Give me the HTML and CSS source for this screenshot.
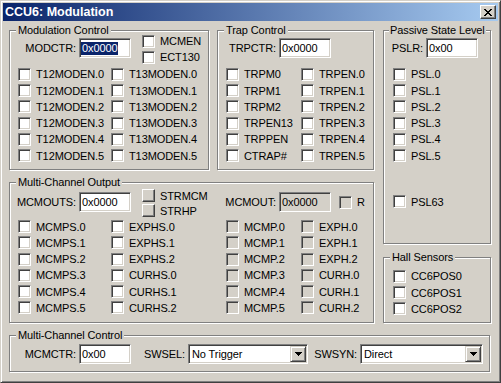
FILE: index.html
```html
<!DOCTYPE html>
<html lang="en">
<head>
  <meta charset="UTF-8">
  <title>CCU6: Modulation</title>
  <link rel="stylesheet" href="styles.css">
</head>
<body>
  <div class="window">
    <div class="titlebar">
      <span class="title">CCU6: Modulation</span>
      <button class="close" type="button">
        <svg width="8" height="7" viewBox="0 0 8 7" shape-rendering="crispEdges">
          <path d="M0 0h2v1h-2zM6 0h2v1h-2zM1 1h2v1h-2zM5 1h2v1h-2zM2 2h4v1h-4zM3 3h2v1h-2zM2 4h4v1h-4zM1 5h2v1h-2zM5 5h2v1h-2zM0 6h2v1h-2zM6 6h2v1h-2z" fill="#000"/>
        </svg>
      </button>
    </div>

    <div class="client">
      <div class="upper">
        <div class="left-col">
          <div class="top-row">
            <fieldset class="group mod">
              <legend>Modulation Control</legend>
              <div class="head">
                <label class="lbl w66">MODCTR:</label>
                <div class="edit"><span class="sel">0x0000</span></div>
                <div class="stack">
                  <label class="chk"><input type="checkbox">MCMEN</label>
                  <label class="chk"><input type="checkbox">ECT130</label>
                </div>
              </div>
              <div class="grid cols-mod">
                <label class="chk"><input type="checkbox">T12MODEN.0</label>
                <label class="chk"><input type="checkbox">T13MODEN.0</label>
                <label class="chk"><input type="checkbox">T12MODEN.1</label>
                <label class="chk"><input type="checkbox">T13MODEN.1</label>
                <label class="chk"><input type="checkbox">T12MODEN.2</label>
                <label class="chk"><input type="checkbox">T13MODEN.2</label>
                <label class="chk"><input type="checkbox">T12MODEN.3</label>
                <label class="chk"><input type="checkbox">T13MODEN.3</label>
                <label class="chk"><input type="checkbox">T12MODEN.4</label>
                <label class="chk"><input type="checkbox">T13MODEN.4</label>
                <label class="chk"><input type="checkbox">T12MODEN.5</label>
                <label class="chk"><input type="checkbox">T13MODEN.5</label>
              </div>
            </fieldset>

            <fieldset class="group trap">
              <legend>Trap Control</legend>
              <div class="head">
                <label class="lbl w58">TRPCTR:</label>
                <div class="edit">0x0000</div>
              </div>
              <div class="grid cols-trap">
                <label class="chk"><input type="checkbox">TRPM0</label>
                <label class="chk"><input type="checkbox">TRPEN.0</label>
                <label class="chk"><input type="checkbox">TRPM1</label>
                <label class="chk"><input type="checkbox">TRPEN.1</label>
                <label class="chk"><input type="checkbox">TRPM2</label>
                <label class="chk"><input type="checkbox">TRPEN.2</label>
                <label class="chk"><input type="checkbox">TRPEN13</label>
                <label class="chk"><input type="checkbox">TRPEN.3</label>
                <label class="chk"><input type="checkbox">TRPPEN</label>
                <label class="chk"><input type="checkbox">TRPEN.4</label>
                <label class="chk"><input type="checkbox">CTRAP#</label>
                <label class="chk"><input type="checkbox">TRPEN.5</label>
              </div>
            </fieldset>
          </div>

          <fieldset class="group mco">
            <legend>Multi-Channel Output</legend>
            <div class="head head-mco">
              <label class="lbl w66">MCMOUTS:</label>
              <div class="edit">0x0000</div>
              <div class="stack stack-btn">
                <label class="chk"><span class="push"></span>STRMCM</label>
                <label class="chk"><span class="push"></span>STRHP</label>
              </div>
              <label class="lbl w58">MCMOUT:</label>
              <div class="edit disabled">0x0000</div>
              <label class="chk chk-r"><input type="checkbox" disabled>R</label>
            </div>
            <div class="grid cols-mco">
              <label class="chk"><input type="checkbox">MCMPS.0</label>
              <label class="chk"><input type="checkbox">EXPHS.0</label>
              <label class="chk"><input type="checkbox" disabled>MCMP.0</label>
              <label class="chk"><input type="checkbox" disabled>EXPH.0</label>
              <label class="chk"><input type="checkbox">MCMPS.1</label>
              <label class="chk"><input type="checkbox">EXPHS.1</label>
              <label class="chk"><input type="checkbox" disabled>MCMP.1</label>
              <label class="chk"><input type="checkbox" disabled>EXPH.1</label>
              <label class="chk"><input type="checkbox">MCMPS.2</label>
              <label class="chk"><input type="checkbox">EXPHS.2</label>
              <label class="chk"><input type="checkbox" disabled>MCMP.2</label>
              <label class="chk"><input type="checkbox" disabled>EXPH.2</label>
              <label class="chk"><input type="checkbox">MCMPS.3</label>
              <label class="chk"><input type="checkbox">CURHS.0</label>
              <label class="chk"><input type="checkbox" disabled>MCMP.3</label>
              <label class="chk"><input type="checkbox" disabled>CURH.0</label>
              <label class="chk"><input type="checkbox">MCMPS.4</label>
              <label class="chk"><input type="checkbox">CURHS.1</label>
              <label class="chk"><input type="checkbox" disabled>MCMP.4</label>
              <label class="chk"><input type="checkbox" disabled>CURH.1</label>
              <label class="chk"><input type="checkbox">MCMPS.5</label>
              <label class="chk"><input type="checkbox">CURHS.2</label>
              <label class="chk"><input type="checkbox" disabled>MCMP.5</label>
              <label class="chk"><input type="checkbox" disabled>CURH.2</label>
            </div>
          </fieldset>
        </div>

        <div class="right-col">
          <fieldset class="group passive">
            <legend>Passive State Level</legend>
            <div class="head">
              <label class="lbl w39">PSLR:</label>
              <div class="edit">0x00</div>
            </div>
            <div class="grid cols-one">
              <label class="chk"><input type="checkbox">PSL.0</label>
              <label class="chk"><input type="checkbox">PSL.1</label>
              <label class="chk"><input type="checkbox">PSL.2</label>
              <label class="chk"><input type="checkbox">PSL.3</label>
              <label class="chk"><input type="checkbox">PSL.4</label>
              <label class="chk"><input type="checkbox">PSL.5</label>
            </div>
            <label class="chk chk-63"><input type="checkbox">PSL63</label>
          </fieldset>

          <fieldset class="group hall">
            <legend>Hall Sensors</legend>
            <div class="grid cols-one">
              <label class="chk"><input type="checkbox">CC6POS0</label>
              <label class="chk"><input type="checkbox">CC6POS1</label>
              <label class="chk"><input type="checkbox">CC6POS2</label>
            </div>
          </fieldset>
        </div>
      </div>

      <fieldset class="group mcc">
        <legend>Multi-Channel Control</legend>
        <div class="mcc-row">
          <label class="lbl w66">MCMCTR:</label>
          <div class="edit">0x00</div>
          <label class="lbl w54">SWSEL:</label>
          <div class="combo w120">
            <span class="combo-text">No Trigger</span>
            <span class="drop"><svg width="7" height="4" viewBox="0 0 7 4" shape-rendering="crispEdges"><path d="M0 0h7v1h-7zM1 1h5v1h-5zM2 2h3v1h-3zM3 3h1v1h-1z" fill="#000"/></svg></span>
          </div>
          <label class="lbl w49">SWSYN:</label>
          <div class="combo w123">
            <span class="combo-text">Direct</span>
            <span class="drop"><svg width="7" height="4" viewBox="0 0 7 4" shape-rendering="crispEdges"><path d="M0 0h7v1h-7zM1 1h5v1h-5zM2 2h3v1h-3zM3 3h1v1h-1z" fill="#000"/></svg></span>
          </div>
        </div>
      </fieldset>
    </div>
  </div>
</body>
</html>
```

FILE: styles.css
```css
body {
  margin: 0;
  font-family: 'Liberation Sans', Arial, sans-serif;
  font-size: 11px;
  letter-spacing: -0.1px;
  color: #000;
  background: #d4d0c8;
}
.window {
  width: 501px;
  height: 383px;
  box-sizing: border-box;
  background: #d4d0c8;
  border: 1px solid;
  border-color: #d4d0c8 #404040 #404040 #d4d0c8;
  box-shadow: inset 1px 1px #fff, inset -1px -1px #808080;
  padding: 2px;
}

/* caption */
.titlebar {
  display: flex;
  align-items: center;
  height: 18px;
  padding: 0 2px;
  background: linear-gradient(to right, #0a246a, #a6caf0);
}
.title {
  flex: 1;
  color: #fff;
  font-size: 12.5px;
  font-weight: bold;
  letter-spacing: 0;
  line-height: 18px;
}
.close {
  width: 16px;
  height: 14px;
  padding: 0;
  box-sizing: border-box;
  display: flex;
  align-items: center;
  justify-content: center;
  background: #d4d0c8;
  border: 1px solid;
  border-color: #fff #404040 #404040 #fff;
  box-shadow: inset -1px -1px #808080;
}

/* layout */
.client {
  padding: 3px 0 0 6px;
}
.upper {
  display: flex;
}
.left-col {
  width: 365px;
}
.top-row {
  display: flex;
  gap: 8px;
}
.right-col {
  width: 108px;
  margin-left: 9px;
}

/* group boxes */
.group {
  box-sizing: border-box;
  margin: 0;
  padding: 0;
  min-width: 0;
  border: 1px solid #808080;
  box-shadow: inset 1px 1px #fff, 1px 1px #fff;
}
.group legend {
  margin-left: 6px;
  padding: 0 2px;
  line-height: 13px;
  white-space: nowrap;
  background: #d4d0c8;
}
.passive legend {
  margin-left: 5px;
  padding: 0 1px;
}
.mod { width: 200px; height: 146px; }
.trap { width: 157px; height: 146px; }
.mco { width: 365px; height: 147px; margin-top: 6px; }
.passive { width: 108px; height: 220px; }
.hall { width: 108px; height: 72px; margin-top: 7px; }
.mcc { width: 481px; height: 43px; margin-top: 6px; }

.head {
  display: flex;
  align-items: flex-start;
  height: 32px;
  margin-top: -4px;
}
.head .lbl,
.head .edit {
  margin-top: 5px;
}
.head-mco {
  height: 30px;
  margin-top: -1px;
}
.head-mco .lbl,
.head-mco .edit {
  margin-top: 4px;
}

/* static text */
.lbl {
  flex: none;
  line-height: 20px;
  text-align: right;
  margin-right: 3px;
  white-space: nowrap;
}
.w39 { width: 39px; }
.w49 { width: 49px; }
.w54 { width: 54px; }
.w58 { width: 58px; }
.w66 { width: 66px; }

/* edit boxes */
.edit {
  flex: none;
  box-sizing: border-box;
  width: 52px;
  height: 20px;
  display: flex;
  align-items: center;
  padding-left: 2px;
  line-height: 13px;
  background: #fff;
  border: 1px solid;
  border-color: #808080 #fff #fff #808080;
  box-shadow: inset 1px 1px #404040, inset -1px -1px #d4d0c8;
}
.edit.disabled {
  background: #d4d0c8;
}
.sel {
  margin-left: -1px;
  padding-left: 1px;
  background: #0a246a;
  color: #fff;
}

/* check boxes */
.chk {
  display: flex;
  align-items: center;
  white-space: nowrap;
}
.chk input {
  -webkit-appearance: none;
  appearance: none;
  flex: none;
  box-sizing: border-box;
  width: 13px;
  height: 13px;
  margin: 0 5px 0 0;
  background: #fff;
  border: 1px solid;
  border-color: #808080 #fff #fff #808080;
  box-shadow: inset 1px 1px #404040, inset -1px -1px #d4d0c8;
}
.chk input:disabled {
  background: #d4d0c8;
}
.push {
  flex: none;
  box-sizing: border-box;
  width: 13px;
  height: 13px;
  margin-right: 5px;
  background: #d4d0c8;
  border: 1px solid;
  border-color: #fff #404040 #404040 #fff;
  box-shadow: inset -1px -1px #808080;
}

.stack {
  display: flex;
  flex-direction: column;
  margin-left: 11px;
}
.stack .chk {
  height: 16px;
}
.stack-btn {
  width: 76px;
}
.stack-btn .chk {
  height: 15px;
}
.chk-r {
  height: 20px;
  margin: 4px 0 0 8px;
}

.grid {
  display: grid;
  grid-auto-rows: 16.25px;
  padding-left: 8px;
}
.cols-mod { grid-template-columns: 93px auto; margin-top: 1.25px; }
.cols-trap { grid-template-columns: 75px auto; margin-top: 1.25px; }
.cols-mco { grid-template-columns: 93px 115px 75px auto; margin-top: 0.5px; }
.cols-one { grid-template-columns: auto; padding-left: 9px; margin-top: 1.25px; }
.hall .cols-one { margin-top: 4.25px; }
.chk-63 {
  height: 16.25px;
  margin: 29.75px 0 0 9px;
}

/* bottom row */
.mcc-row {
  display: flex;
  align-items: center;
  margin-top: 2px;
}
.combo {
  flex: none;
  box-sizing: border-box;
  height: 20px;
  display: flex;
  align-items: center;
  padding: 1px;
  background: #fff;
  border: 1px solid;
  border-color: #808080 #fff #fff #808080;
  box-shadow: inset 1px 1px #404040, inset -1px -1px #d4d0c8;
}
.w120 { width: 120px; }
.w123 { width: 123px; }
.combo-text {
  flex: 1;
  padding-left: 2px;
}
.drop {
  box-sizing: border-box;
  width: 16px;
  height: 16px;
  display: flex;
  align-items: center;
  justify-content: center;
  background: #d4d0c8;
  border: 1px solid;
  border-color: #d4d0c8 #404040 #404040 #d4d0c8;
  box-shadow: inset 1px 1px #fff, inset -1px -1px #808080;
}
```
